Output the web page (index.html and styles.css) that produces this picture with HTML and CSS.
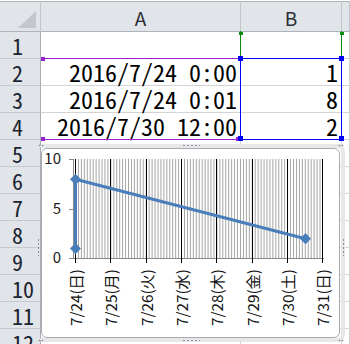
FILE: index.html
```html
<!DOCTYPE html>
<html lang="ja">
<head>
<meta charset="utf-8">
<link rel="stylesheet" href="styles.css">
</head>
<body>
<div class="page">
  <div class="sheet">
    <div class="ch corner"><span class="tri"></span></div>
    <div class="ch">A</div>
    <div class="ch">B</div>
    <div class="ch"></div>

    <div class="rh">1</div><div class="c"></div><div class="c"></div><div class="c"></div>
    <div class="rh">2</div><div class="c num">2016/7/24 0:00</div><div class="c num">1</div><div class="c"></div>
    <div class="rh">3</div><div class="c num">2016/7/24 0:01</div><div class="c num">8</div><div class="c"></div>
    <div class="rh">4</div><div class="c num">2016/7/30 12:00</div><div class="c num">2</div><div class="c"></div>
    <div class="rh">5</div><div class="c"></div><div class="c"></div><div class="c"></div>
    <div class="rh">6</div><div class="c"></div><div class="c"></div><div class="c"></div>
    <div class="rh">7</div><div class="c"></div><div class="c"></div><div class="c"></div>
    <div class="rh">8</div><div class="c"></div><div class="c"></div><div class="c"></div>
    <div class="rh">9</div><div class="c"></div><div class="c"></div><div class="c"></div>
    <div class="rh">10</div><div class="c"></div><div class="c"></div><div class="c"></div>
    <div class="rh">11</div><div class="c"></div><div class="c"></div><div class="c"></div>
    <div class="rh">12</div><div class="c"></div><div class="c"></div><div class="c"></div>
  </div>

  <div class="sel-name"></div>
  <div class="sel-cat"></div>
  <div class="sel-val"></div>
  <span class="hd g" style="left:239px;top:32px"></span>
  <span class="hd g" style="left:340px;top:32px"></span>
  <span class="hd p" style="left:41px;top:57px"></span>
  <span class="hd p" style="left:41px;top:137px"></span>
  <span class="hd p" style="left:236px;top:137px"></span>
  <span class="hd b" style="left:238px;top:56px"></span>
  <span class="hd b" style="left:339px;top:56px"></span>
  <span class="hd b" style="left:238px;top:136px"></span>
  <span class="hd b" style="left:339px;top:136px"></span>

  <div class="chart">
    <span class="grip gh" style="left:141px;top:0px"></span>
    <span class="grip gh" style="left:141px;bottom:0px"></span>
    <span class="grip gv" style="left:0px;top:90px"></span>
    <span class="grip gv" style="right:0px;top:90px"></span>
    <span class="grip gc" style="right:1px;top:0px"></span>
    <span class="grip gc" style="left:1px;top:0px"></span>
    <span class="grip gc" style="right:1px;bottom:0px"></span>
    <span class="grip gc" style="left:1px;bottom:0px"></span>
    <div class="chart-inner">
      <svg class="plot" width="299" height="190" viewBox="0 0 299 190">
        <defs>
          <pattern id="minor" x="75" y="0" width="2.946" height="10" patternUnits="userSpaceOnUse">
            <rect x="0" y="0" width="1" height="10" fill="#a4a4a4"/>
          </pattern>
        </defs>
        <g transform="translate(-41,-148)">
          <rect x="75" y="159" width="248" height="100" fill="url(#minor)"/>
          <line x1="73.5" y1="159" x2="73.5" y2="259" stroke="#8a8a8a" stroke-width="1"/>
          <line x1="69" y1="159.5" x2="74" y2="159.5" stroke="#8a8a8a"/>
          <line x1="69" y1="209.5" x2="74" y2="209.5" stroke="#8a8a8a"/>
          <line x1="69" y1="258.5" x2="74" y2="258.5" stroke="#8a8a8a"/>
          <line x1="73" y1="258.5" x2="324" y2="258.5" stroke="#8a8a8a"/>
          <g stroke="#000" stroke-width="1">
            <line x1="75.5" y1="159" x2="75.5" y2="263"/>
            <line x1="110.5" y1="159" x2="110.5" y2="263"/>
            <line x1="146.5" y1="159" x2="146.5" y2="263"/>
            <line x1="181.5" y1="159" x2="181.5" y2="263"/>
            <line x1="216.5" y1="159" x2="216.5" y2="263"/>
            <line x1="252.5" y1="159" x2="252.5" y2="263"/>
            <line x1="287.5" y1="159" x2="287.5" y2="263"/>
            <line x1="322.5" y1="159" x2="322.5" y2="263"/>
          </g>
          <polyline points="75.5,248.6 75.5,179.3 305.5,238.7" fill="none" stroke="#4a7ebb" stroke-width="3" stroke-linejoin="round"/>
          <g fill="#4a7ebb">
            <polygon points="75.5,243 81,248.6 75.5,254.2 70,248.6"/>
            <polygon points="75.5,173.7 81,179.3 75.5,184.9 70,179.3"/>
            <polygon points="305.5,233.1 311,238.7 305.5,244.3 300,238.7"/>
          </g>
          <g class="ylab" text-anchor="end">
            <text x="61" y="164">10</text>
            <text x="61" y="214">5</text>
            <text x="61" y="263">0</text>
          </g>
          <g class="xlab" text-anchor="end">
            <text transform="translate(82,269) rotate(-90)" textLength="57" lengthAdjust="spacingAndGlyphs">7/24(日)</text>
            <text transform="translate(117,269) rotate(-90)" textLength="57" lengthAdjust="spacingAndGlyphs">7/25(月)</text>
            <text transform="translate(153,269) rotate(-90)" textLength="57" lengthAdjust="spacingAndGlyphs">7/26(火)</text>
            <text transform="translate(188,269) rotate(-90)" textLength="57" lengthAdjust="spacingAndGlyphs">7/27(水)</text>
            <text transform="translate(223,269) rotate(-90)" textLength="57" lengthAdjust="spacingAndGlyphs">7/28(木)</text>
            <text transform="translate(259,269) rotate(-90)" textLength="57" lengthAdjust="spacingAndGlyphs">7/29(金)</text>
            <text transform="translate(294,269) rotate(-90)" textLength="57" lengthAdjust="spacingAndGlyphs">7/30(土)</text>
            <text transform="translate(329,269) rotate(-90)" textLength="57" lengthAdjust="spacingAndGlyphs">7/31(日)</text>
          </g>
        </g>
      </svg>
    </div>
  </div>
</div>
</body>
</html>
```

FILE: styles.css
```css
html, body {
  margin: 0;
  padding: 0;
  background: #ffffff;
}
.page {
  position: relative;
  width: 350px;
  height: 344px;
  overflow: hidden;
  font-family: "Noto Sans CJK JP", "DejaVu Sans", sans-serif;
}
.sheet {
  display: grid;
  grid-template-columns: 41px 200px 101px 1fr;
  grid-template-rows: 31px repeat(12, 27px);
  margin-top: 1px;
}
.sheet > div {
  box-sizing: border-box;
}
.ch {
  background: #e1e4e8;
  border-top: 1px solid #afb4ba;
  border-right: 1px solid #c3c7cc;
  border-bottom: 1px solid #aeb3b9;
  display: flex;
  align-items: center;
  justify-content: center;
  font-size: 19px;
  color: #2b2f36;
  line-height: 1;
  padding-top: 1px;
}
.corner {
  position: relative;
}
.tri {
  position: absolute;
  right: 4px;
  bottom: 3px;
  width: 0;
  height: 0;
  border-left: 18px solid transparent;
  border-bottom: 17px solid #c3c7cb;
}
.rh {
  background: #e1e4e8;
  border-right: 1px solid #a9aeb4;
  border-bottom: 1px solid #c6cace;
  display: flex;
  align-items: center;
  padding-left: 12px;
  font-size: 22px;
  line-height: 1;
  color: #1c2430;
  font-feature-settings: "hwid" 1;
}
.c {
  border-right: 1px solid #d4d4d4;
  border-bottom: 1px solid #d4d4d4;
}
.num {
  display: flex;
  align-items: center;
  justify-content: flex-end;
  padding-right: 3px;
  font-size: 24px;
  line-height: 1;
  color: #000;
  font-feature-settings: "hwid" 1;
  white-space: nowrap;
}

/* range highlight overlays */
.sel-name {
  position: absolute;
  left: 240px;
  top: 31px;
  width: 102px;
  height: 28px;
  box-sizing: border-box;
  border-left: 1px solid #0a8a0a;
  border-right: 1px solid #0a8a0a;
}
.sel-cat {
  position: absolute;
  left: 41px;
  top: 58px;
  width: 200px;
  height: 82px;
  box-sizing: border-box;
  border-top: 1px solid #9a1fd0;
  border-bottom: 1px solid #9a1fd0;
}
.sel-val {
  position: absolute;
  left: 240px;
  top: 58px;
  width: 102px;
  height: 82px;
  box-sizing: border-box;
  border: 1px solid #0000ff;
}
.hd {
  position: absolute;
  display: block;
}
.hd.g { width: 4px; height: 3px; background: #0a8a0a; }
.hd.p { width: 4px; height: 4px; background: #9a1fd0; }
.hd.b { width: 5px; height: 5px; background: #0000ff; }

/* chart */
.chart {
  position: absolute;
  left: 37px;
  top: 144px;
  width: 308px;
  height: 198px;
  box-sizing: border-box;
  border: 4px solid #e6e7e9;
  border-left-color: transparent;
  border-radius: 8px;
}
.chart-inner {
  position: absolute;
  left: 0;
  top: 0;
  width: 299px;
  height: 190px;
  box-sizing: border-box;
  border: 1px solid #a8abaf;
  border-radius: 6px;
  background: #ffffff;
  overflow: hidden;
}
.plot {
  position: absolute;
  left: -1px;
  top: -1px;
  display: block;
}
.grip {
  position: absolute;
  display: block;
  z-index: 2;
}
.gh {
  width: 18px;
  height: 3px;
  background-image: radial-gradient(circle, #8e9195 0.8px, transparent 1.1px);
  background-size: 4px 3px;
  margin-top: -4px;
}
.gh[style*="bottom"] {
  margin-top: 0;
  margin-bottom: -4px;
}
.gv {
  width: 3px;
  height: 18px;
  background-image: radial-gradient(circle, #8e9195 0.8px, transparent 1.1px);
  background-size: 3px 4px;
  margin-left: -4px;
}
.gv[style*="right"] {
  margin-left: 0;
  margin-right: -4px;
}
.gc {
  width: 6px;
  height: 3px;
  background-image: radial-gradient(circle, #8e9195 0.8px, transparent 1.1px);
  background-size: 3px 3px;
  margin: -4px;
}
.ylab text {
  font-family: "Noto Sans CJK JP", "DejaVu Sans", sans-serif;
  font-size: 15px;
  fill: #1a1a1a;
}
.xlab text {
  font-family: "Noto Sans CJK JP", "DejaVu Sans", sans-serif;
  font-size: 15px;
  fill: #111;
}
```
